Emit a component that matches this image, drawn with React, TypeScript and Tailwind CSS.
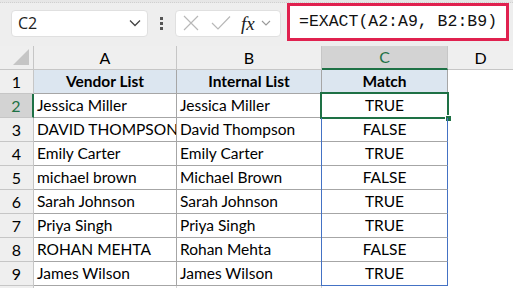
import React from "react";

const rows: [string, string, string][] = [
  ["Jessica Miller", "Jessica Miller", "TRUE"],
  ["DAVID THOMPSON", "David Thompson", "FALSE"],
  ["Emily Carter", "Emily Carter", "TRUE"],
  ["michael brown", "Michael Brown", "FALSE"],
  ["Sarah Johnson", "Sarah Johnson", "TRUE"],
  ["Priya Singh", "Priya Singh", "TRUE"],
  ["ROHAN MEHTA", "Rohan Mehta", "FALSE"],
  ["James Wilson", "James Wilson", "TRUE"],
];

const cellFont = { fontFamily: "Lato, 'Open Sans', sans-serif" };

export default function App() {
  return (
    <div className="w-[513px] h-[288px] overflow-hidden bg-white relative" style={cellFont}>
      {/* toolbar */}
      <div className="h-[46px] bg-[#eeeeee] relative">
        <div className="h-[3px] bg-[#e6e6e6] border-b border-dotted border-[#d0d0d0]" />
        <div className="flex items-center h-[43px] pb-[3px]">
          <div className="ml-[11px] w-[137px] h-[27px] bg-white rounded-[4px] border border-[#e0e0e0] flex items-center justify-between pl-[6px] pr-[6px]">
            <span className="text-[16px] text-[#222]" style={{ fontFamily: "'Open Sans', sans-serif" }}>C2</span>
            <svg width="12" height="8" viewBox="0 0 12 8"><path d="M1 1.5 L6 6.5 L11 1.5" stroke="#444" strokeWidth="1.3" fill="none" /></svg>
          </div>
          <div className="w-[27px] flex flex-col items-center gap-[2px]">
            <div className="w-[3px] h-[3px] bg-[#555]" />
            <div className="w-[3px] h-[3px] bg-[#555]" />
            <div className="w-[3px] h-[3px] bg-[#555]" />
          </div>
          <div className="w-[106px] h-[27px] bg-white rounded-[4px] border border-[#e0e0e0] flex items-center pl-[7px]">
            <svg width="16" height="16" viewBox="0 0 16 16"><path d="M1 1 L15 15 M15 1 L1 15" stroke="#b8b8b8" strokeWidth="1.2" fill="none" /></svg>
            <svg className="ml-[12px]" width="20" height="16" viewBox="0 0 20 16"><path d="M1 8 L7 14 L19 1.5" stroke="#b8b8b8" strokeWidth="1.2" fill="none" /></svg>
            <span className="ml-[10px] text-[19px] italic text-[#222] leading-none" style={{ fontFamily: "'Liberation Serif', serif" }}>fx</span>
            <svg className="ml-[6px]" width="10" height="6" viewBox="0 0 10 6"><path d="M1 1 L5 5 L9 1" stroke="#999" strokeWidth="1.1" fill="none" /></svg>
          </div>
        </div>
        <div className="absolute left-[287px] top-[3px] w-[222px] h-[38px] border-[3px] border-[#e0214f] bg-white flex items-center pl-[9px]">
          <span className="text-[16.5px] text-[#111]" style={{ fontFamily: "'Liberation Mono', monospace" }}>=EXACT(A2:A9, B2:B9)</span>
        </div>
      </div>

      {/* grid */}
      <div className="grid grid-cols-[34px_143px_145px_126px_65px] auto-rows-[24px] text-[15.5px] text-black">
        {/* header row */}
        <div className="bg-[#efefef] border-r border-b border-[#c6c6c6] relative">
          <div className="absolute right-[4px] bottom-[4px] w-0 h-0 border-l-[16px] border-l-transparent border-b-[16px] border-b-[#c5c5c5]" />
        </div>
        <div className="bg-[#efefef] border-r border-b border-[#c6c6c6] flex items-center justify-center text-[16px]">A</div>
        <div className="bg-[#efefef] border-r border-b border-[#c6c6c6] flex items-center justify-center text-[16px]">B</div>
        <div className="bg-[#d3d3d3] border-r border-[#c6c6c6] border-b-2 border-b-[#1e7145] flex items-center justify-center text-[#1e7145] text-[16px]">C</div>
        <div className="bg-[#efefef] border-b border-[#c6c6c6] flex items-center justify-center text-[16px]">D</div>

        {/* row 1 */}
        <div className="bg-[#efefef] border-r border-b border-[#c6c6c6] flex items-center justify-center text-[16px]">1</div>
        <div className="bg-[#dce6f0] border-r border-b border-[#a6a6a6] flex items-center justify-center font-bold">Vendor List</div>
        <div className="bg-[#dce6f0] border-r border-b border-[#a6a6a6] flex items-center justify-center font-bold">Internal List</div>
        <div className="bg-[#dce6f0] border-r border-b border-[#a6a6a6] flex items-center justify-center font-bold">Match</div>
        <div className="bg-white" />

        {rows.map((r, i) => {
          const sel = i === 0;
          const last = i === rows.length - 1;
          return (
            <React.Fragment key={i}>
              <div
                className={
                  sel
                    ? "bg-[#d3d3d3] border-r-2 border-r-[#1e7145] border-b border-b-[#c6c6c6] flex items-center justify-center text-[#1e7145] text-[16px]"
                    : "bg-[#efefef] border-r border-b border-[#c6c6c6] flex items-center justify-center text-[16px]"
                }
              >
                {i + 2}
              </div>
              <div className="border-r border-b border-[#a6a6a6] flex items-center pl-[3px] whitespace-nowrap overflow-hidden">{r[0]}</div>
              <div className="border-r border-b border-[#a6a6a6] flex items-center pl-[3px] whitespace-nowrap overflow-hidden">{r[1]}</div>
              <div
                className={
                  "border-r border-r-[#4472c4] border-b flex items-center justify-center relative " +
                  (last ? "border-b-[#4472c4]" : "border-b-[#a6a6a6]")
                }
              >
                <div className="absolute left-[-1px] top-0 bottom-[-1px] w-[1px] bg-[#4472c4]" />
                {r[2]}
                {sel && (
                  <>
                    <div className="absolute left-[-2px] top-[-2px] right-[-2px] bottom-[-2px] border-2 border-[#1e7145] pointer-events-none" />
                    <div className="absolute right-[-5px] bottom-[-5px] w-[7px] h-[7px] bg-[#1e7145] border border-white" />
                  </>
                )}
              </div>
              <div className="bg-white" />
            </React.Fragment>
          );
        })}

        {/* row 10 partial */}
        <div className="bg-[#efefef] border-r border-[#c6c6c6]" />
        <div className="border-r border-[#d4d4d4]" />
        <div className="border-r border-[#d4d4d4]" />
        <div />
        <div />
      </div>
    </div>
  );
}
